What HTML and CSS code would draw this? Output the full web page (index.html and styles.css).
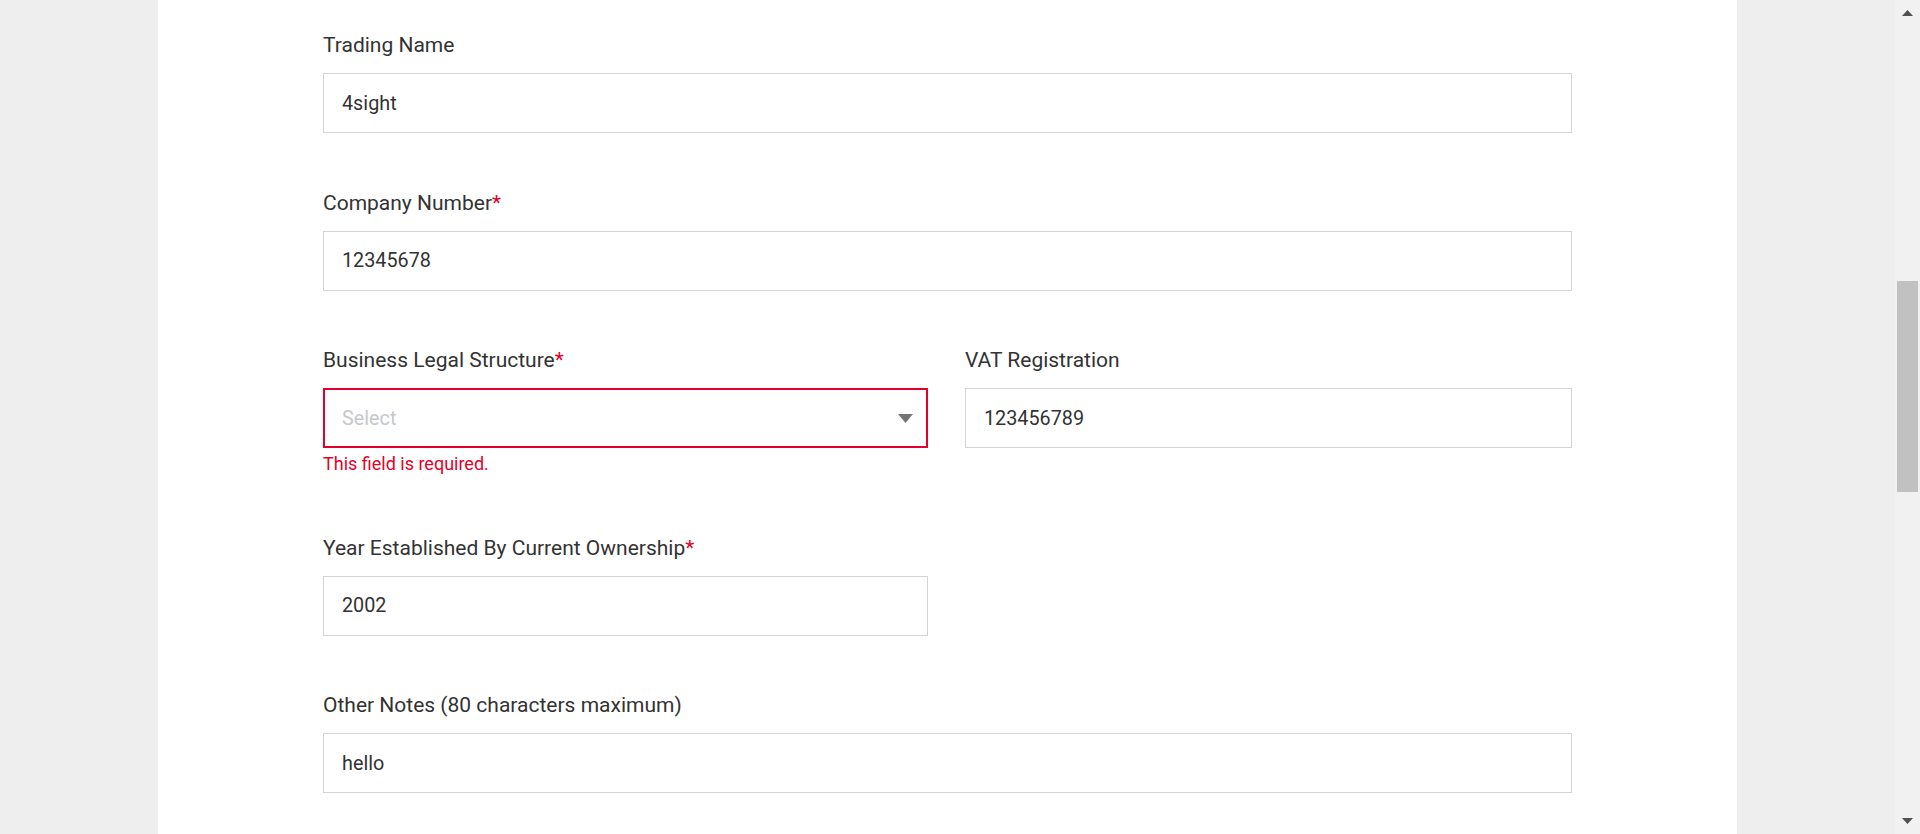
FILE: index.html
```html
<!DOCTYPE html>
<html lang="en">
<head>
<meta charset="utf-8">
<title>Business Details</title>
<link rel="stylesheet" href="styles.css">
</head>
<body>
<div class="viewport">
  <main class="page">
    <div class="panel">
      <form class="form">
        <div class="field">
          <label class="label" for="trading">Trading Name</label>
          <input class="input" id="trading" type="text" value="4sight">
        </div>
        <div class="field">
          <label class="label" for="company">Company Number<span class="req">*</span></label>
          <input class="input" id="company" type="text" value="12345678">
        </div>
        <div class="row">
          <div class="field">
            <label class="label">Business Legal Structure<span class="req">*</span></label>
            <div class="select is-error">
              <span class="placeholder">Select</span>
              <svg class="caret" width="15" height="9" viewBox="0 0 15 9"><polygon points="0,0 15,0 7.5,9" fill="#757575"/></svg>
            </div>
            <div class="error">This field is required.</div>
          </div>
          <div class="field">
            <label class="label" for="vat">VAT Registration</label>
            <input class="input" id="vat" type="text" value="123456789">
          </div>
        </div>
        <div class="row">
          <div class="field">
            <label class="label" for="year">Year Established By Current Ownership<span class="req">*</span></label>
            <input class="input" id="year" type="text" value="2002">
          </div>
        </div>
        <div class="field">
          <label class="label" for="notes">Other Notes (80 characters maximum)</label>
          <input class="input" id="notes" type="text" value="hello">
        </div>
      </form>
    </div>
  </main>
  <div class="scrollbar">
    <div class="sb-btn">
      <svg width="11" height="6" viewBox="0 0 11 6"><polygon points="5.5,0 11,6 0,6" fill="#505050"/></svg>
    </div>
    <div class="sb-track">
      <div class="sb-thumb"></div>
    </div>
    <div class="sb-btn sb-btn-down">
      <svg width="11" height="6" viewBox="0 0 11 6"><polygon points="0,0 11,0 5.5,6" fill="#505050"/></svg>
    </div>
  </div>
</div>
</body>
</html>
```
FILE: styles.css
```css
* { box-sizing: border-box; }
html, body { margin: 0; padding: 0; height: 834px; overflow: hidden; }
body { font-family: Roboto, "Liberation Sans", Arial, sans-serif; color: #333333; }

.viewport { display: flex; height: 834px; }

.page {
  flex: 1;
  background: #eeeeee;
  display: flex;
  justify-content: center;
  overflow: hidden;
}

.panel {
  width: 1579px;
  background: #ffffff;
  padding: 33px 165px 0 165px;
}

.form { display: flex; flex-direction: column; }

.field { display: flex; flex-direction: column; margin-bottom: 57.5px; }
.row .field { margin-bottom: 0; }
.row { display: grid; grid-template-columns: 605px 1fr; column-gap: 37px; margin-bottom: 57.5px; }

.label {
  font-size: 21px;
  line-height: 25px;
  color: #333333;
  margin-bottom: 15px;
}
.req { color: #e4002b; }

.input {
  height: 60px;
  border: 1px solid #d4d4d4;
  border-radius: 0;
  padding: 0 18px;
  font-family: Roboto, "Liberation Sans", Arial, sans-serif;
  font-size: 19.8px;
  color: #333333;
  background: #ffffff;
  outline: none;
  width: 100%;
}

.select {
  height: 60px;
  border: 2px solid #e4002b;
  padding: 0 13px 0 17px;
  display: flex;
  align-items: center;
  justify-content: space-between;
  background: #ffffff;
}
.placeholder { font-size: 19.8px; color: #c5c8cd; }
.caret { display: block; margin-top: 1px; }

.error {
  margin-top: 2px;
  font-size: 18px;
  line-height: 28px;
  color: #e4002b;
}

.scrollbar {
  width: 25px;
  background: #f1f1f1;
  display: flex;
  flex-direction: column;
}
.sb-btn {
  height: 26px;
  display: flex;
  justify-content: center;
  padding-top: 10px;
}
.sb-btn-down { padding-top: 0; align-items: flex-end; padding-bottom: 10px; }
.sb-track { flex: 1; padding: 0 2px; }
.sb-thumb {
  margin-top: 255px;
  height: 211px;
  background: #c1c1c1;
}
```
